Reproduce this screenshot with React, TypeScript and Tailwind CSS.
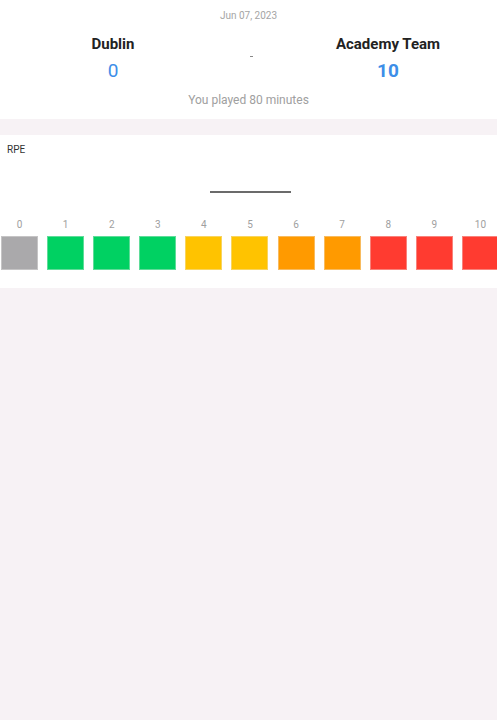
import React from "react";

const colors = [
  "bg-[#aaa9ab]",
  "bg-[#00d162]",
  "bg-[#00d162]",
  "bg-[#00d162]",
  "bg-[#ffc300]",
  "bg-[#ffc300]",
  "bg-[#ff9a00]",
  "bg-[#ff9a00]",
  "bg-[#ff3b30]",
  "bg-[#ff3b30]",
  "bg-[#ff3b30]",
];

export default function App() {
  return (
    <div className="w-[497px] h-[720px] bg-[#f7f2f5] overflow-hidden" style={{ fontFamily: "Roboto, 'Noto Sans', sans-serif" }}>
      <div className="bg-white h-[119px] flex flex-col items-center">
        <div className="mt-[10px] text-[10px] leading-[12px] text-[#a5a5a5]">Jun 07, 2023</div>
        <div className="flex w-full mt-[13px]">
          <div className="w-[226px] flex flex-col items-center">
            <div className="text-[15px] leading-[18px] font-bold text-[#222]">Dublin</div>
            <div className="text-[19px] leading-[22px] text-[#3d8ee8] mt-[7px]">0</div>
          </div>
          <div className="flex-1 flex justify-center pt-[21px]">
            <div className="w-[3px] h-[1px] bg-[#888] mr-[2px]"></div>
          </div>
          <div className="w-[218px] flex flex-col items-center">
            <div className="text-[15px] leading-[18px] font-bold text-[#222]">Academy Team</div>
            <div className="text-[19px] leading-[22px] font-bold text-[#3d8ee8] mt-[7px]">10</div>
          </div>
        </div>
        <div className="mt-[11px] text-[12px] leading-[14px] text-[#a0a0a0]">You played 80 minutes</div>
      </div>
      <div className="bg-white mt-[16px] h-[153px] overflow-hidden">
        <div className="pl-[7px] pt-[9px] text-[10px] leading-[12px] text-[#333]">RPE</div>
        <div className="flex justify-center mt-[35px] pl-[4px]">
          <div className="w-[81px] h-[1.5px] bg-[#6b6b6b]"></div>
        </div>
        <div className="flex gap-[9.1px] pl-[1px] mt-[26px]">
          {colors.map((c, i) => (
            <div key={i} className="flex flex-col items-center shrink-0 w-[37px]">
              <div className="text-[10px] leading-[12px] text-[#a0a0a0]">{i}</div>
              <div className={`mt-[5px] w-[37px] h-[34px] ${c} border border-[#eeeeee]/40`}></div>
            </div>
          ))}
        </div>
      </div>
    </div>
  );
}
